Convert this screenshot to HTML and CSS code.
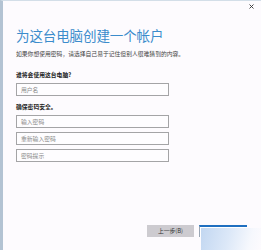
FILE: index.html
```html
<!DOCTYPE html>
<html lang="zh-CN">

<head>
    <meta charset="UTF-8">
    <meta name="viewport" content="width=device-width, initial-scale=1.0">
    <title>创建帐户</title>
    <link rel="stylesheet" href="styles.css">
</head>

<body>
    <div class="window">
        <div class="titlebar">
            <svg class="close" width="5" height="5" viewBox="0 0 5 5">
                <path d="M0.5 0.5 L4.5 4.5 M4.5 0.5 L0.5 4.5" stroke="#333" stroke-width="0.9" />
            </svg>
        </div>

        <div class="content">
            <h1 class="title">为这台电脑创建一个帐户</h1>
            <p class="desc">如果你想使用密码，请选择自己易于记住但别人很难猜到的内容。</p>

            <p class="label first">谁将会使用这台电脑?</p>
            <div class="field">用户名</div>

            <p class="label">确保密码安全。</p>
            <div class="field">输入密码</div>
            <div class="field">重新输入密码</div>
            <div class="field">密码提示</div>
        </div>

        <div class="footer">
            <button class="btn">上一步(B)</button>
            <button class="btn next">下一步(N)</button>
        </div>

        <div class="mark"></div>
    </div>
</body>

</html>
```

FILE: styles.css
```css
html,
body {
    margin: 0;
    padding: 0;
    width: 261px;
    height: 250px;
    overflow: hidden;
}

body {
    font-family: "Noto Sans CJK SC", "Noto Sans", sans-serif;
    background-color: #fdfbfe;
}

.window {
    position: relative;
    box-sizing: border-box;
    width: 261px;
    height: 250px;
    border-left: 3px solid #b3c3d3;
    border-top: 1px solid #d3dee8;
    background-color: #fdfbfe;
    display: flex;
    flex-direction: column;
}

.titlebar {
    height: 19px;
    display: flex;
    justify-content: flex-end;
    align-items: flex-start;
}

.close {
    margin-top: 3px;
    margin-right: 7px;
}

.content {
    padding-left: 13px;
}

.title {
    margin: 7px 0 0 0;
    font-size: 13.5px;
    line-height: 16px;
    font-weight: 400;
    color: #3b8ccc;
    letter-spacing: -0.1px;
}

.desc {
    margin: 7px 0 0 0;
    font-size: 5.8px;
    line-height: 8px;
    color: #444;
}

.label {
    margin: 7px 0 4px 0;
    font-size: 5.8px;
    line-height: 8px;
    color: #222;
    font-weight: 700;
}

.label.first {
    margin-top: 13px;
}

.field {
    box-sizing: border-box;
    width: 153px;
    height: 13px;
    margin-bottom: 4px;
    border: 1px solid #a4a4a6;
    background-color: #fefdff;
    padding-left: 4px;
    font-size: 5.8px;
    line-height: 11px;
    color: #8a8a8a;
}

.footer {
    margin-top: auto;
    padding: 0 14px 13px 0;
    display: flex;
    justify-content: flex-end;
    gap: 5px;
}

.btn {
    box-sizing: border-box;
    width: 47px;
    height: 12px;
    padding: 0;
    border: none;
    background-color: #cdcbd0;
    font-family: "Noto Sans CJK SC", "Noto Sans", sans-serif;
    font-size: 5.8px;
    line-height: 12px;
    color: #333;
}

.btn.next {
    width: 48px;
    border-top: 2px solid #1f6fc0;
    border-left: 1px solid #9aa6b4;
    background-color: #ffffff;
    color: #ffffff;
}

.mark {
    position: absolute;
    left: 198px;
    top: 227px;
    right: 0;
    bottom: 0;
    background: linear-gradient(105deg, #c2d7f1 0%, #dce8f8 45%, #f6f8fd 80%, #fdfbfe 100%);
}
```
